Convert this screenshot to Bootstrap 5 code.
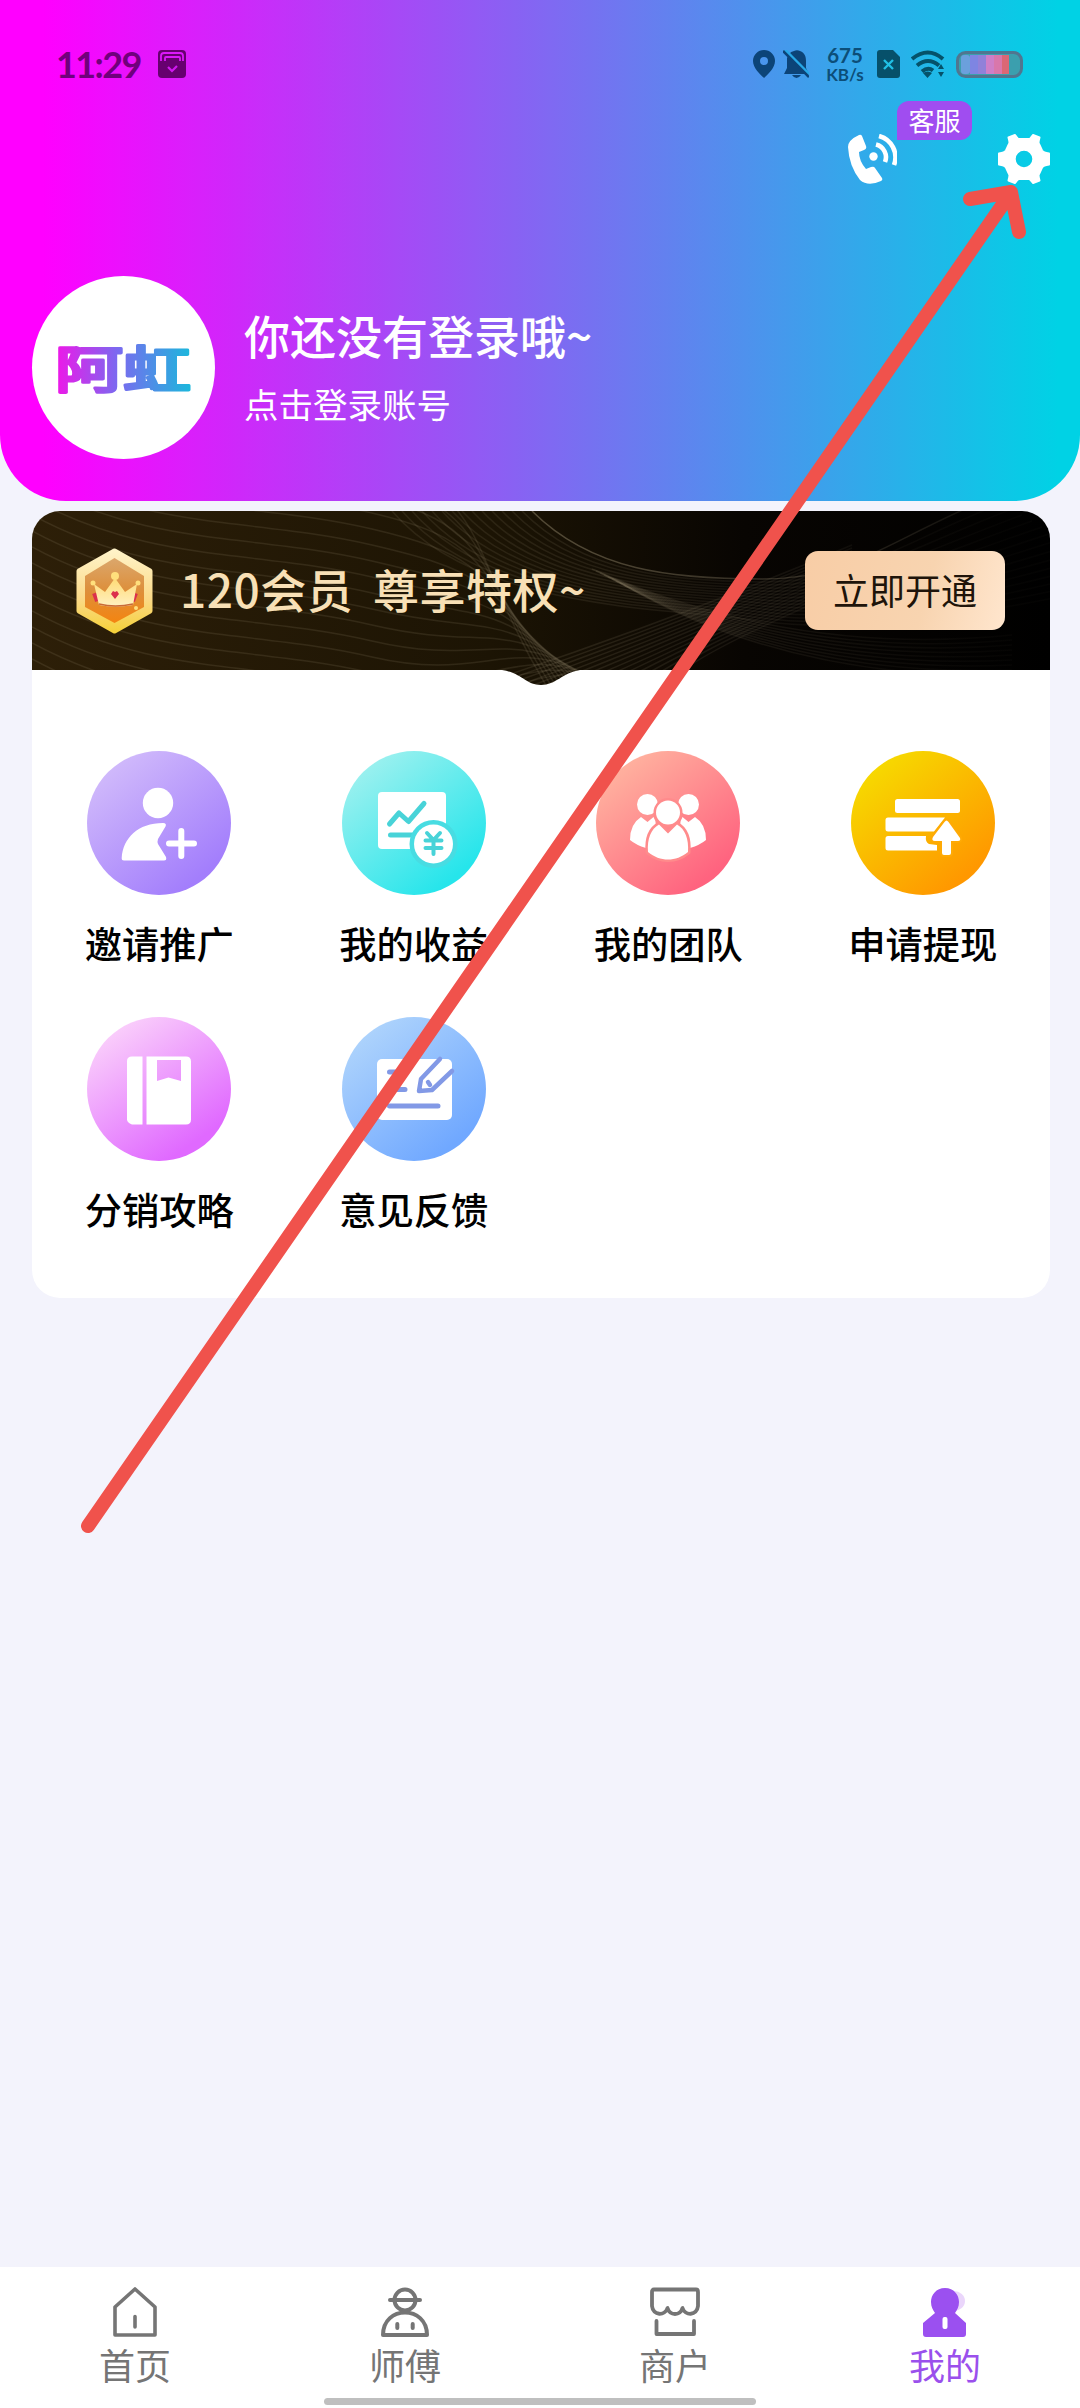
<!DOCTYPE html>
<html lang="zh-CN">
<head>
<meta charset="utf-8">
<meta name="viewport" content="width=device-width, initial-scale=1">
<title>我的</title>
<link href="https://cdn.jsdelivr.net/npm/bootstrap@5.3.0/dist/css/bootstrap.min.css" rel="stylesheet">
<style>
  body { background: #f3f3fc; font-family: "Noto Sans CJK SC", "Noto Sans", sans-serif; color: #000; }
  svg { display: block; flex: none; }
  .app { width: 1080px; height: 2408px; overflow: hidden; }
  .hero { height: 501px; border-radius: 0 0 66px 66px; background: linear-gradient(90deg, #f0f 4%, #00d2e5 98%); }
  .status { height: 86px; padding: 42px 57px 0 56px; }
  .clock { font: 700 36px/44px Lato, sans-serif; color: #70007c; letter-spacing: -1.6px; width: 102px; }
  .speed { width: 38px; margin: 0 13px 0 17px; font-family: Lato, sans-serif; font-weight: 700; color: #0c4e78; text-align: center; white-space: nowrap; }
  .speed-num { font-size: 20.5px; line-height: 20px; }
  .speed-unit { font-size: 17px; line-height: 19px; }
  .sim-gap { margin-left: 11px; }
  .actions { margin-top: 48px; padding-right: 30px; gap: 101px; }
  .tip { left: 49px; top: -33px; width: 75px; height: 39px; border-radius: 12px 12px 12px 0; background: #a04df0; font-size: 26px; line-height: 37px; }
  .profile { margin-top: 92px; padding-left: 32px; gap: 29px; }
  .avatar { width: 183px; height: 183px; }
  .hello { font-size: 46px; line-height: 60px; font-weight: 500; margin-top: -5px; }
  .hint { font-size: 34.5px; line-height: 46px; margin-top: 16px; font-weight: 400; }
  .panel { margin: 10px 30px 0 32px; border-radius: 28px; width: 1018px; height: 787px; }
  .vip { height: 159px; padding: 0 45px 0 43px; }
  .vip-bg { left: 0; top: 0; }
  .vip-title { margin-left: 26px; font-size: 46px; font-weight: 500; line-height: 60px; color: #f8e0b6; letter-spacing: .5px; word-spacing: 9px; white-space: pre; padding-bottom: 5px; }
  .vip-btn { width: 200px; height: 79px; border-radius: 13px; border: 0; font-size: 36px; line-height: 36px; color: #20140a; background: linear-gradient(105deg, #f8cda6, #f8d4b0 60%, #ffe6ce); padding: 0 0 3px; }
  .tiles { padding-top: 81px; }
  .tile { height: 266px; }
  .tile-name { margin-top: 26px; font-size: 37.3px; line-height: 44px; font-weight: 500; }
  .tabs { height: 141px; }
  .tab-item { color: #757575; padding-top: 20px; }
  .tab-item.on { color: #9a50ec; }
  .tab-name { font-size: 36px; line-height: 40px; margin-top: 7px; }
  .pill { width: 432px; height: 7px; margin-top: 14px; background: #bfbfbf; }
  .pointer { left: 0; top: 0; pointer-events: none; }
</style>
<script src="https://cdn.jsdelivr.net/npm/bootstrap@5.3.0/dist/js/bootstrap.bundle.min.js"></script>
</head>
<body>
<div class="app position-relative d-flex flex-column">
  <header class="hero text-white">
    <div class="status d-flex align-items-center">
      <span class="clock">11:29</span>
      <svg width="28" height="28" viewBox="0 0 28 28"><rect width="28" height="28" rx="4" fill="#67006f"/><path d="M3 11V6q0-3 3-3h16q3 0 3 3v5M7 11V8q0-1 1-1h13q1 0 1 1v3" fill="none" stroke="#dc18fb" stroke-width="1.8"/><path d="M10 17l4 4 5-5" fill="none" stroke="#d018f0" stroke-width="2.2"/></svg>
      <div class="d-flex align-items-center ms-auto">
        <svg width="22" height="28" viewBox="0 0 22 28" fill="#0c4478"><path fill-rule="evenodd" d="M11 0a11 11 0 0 1 11 11c0 7-7 13-11 17C7 24 0 18 0 11A11 11 0 0 1 11 0zm0 7a4 4 0 1 0 0 8 4 4 0 0 0 0-8z"/></svg>
        <svg class="ms-2" width="26" height="28" viewBox="-1 0 26 28"><path d="M5 4a10 10 0 0 1 5-3c2-1 4-1 6 0 5 2 6 6 6 10v7l3 6H0l3-6V8zM8 25h9q-2 3-4.500 3T8 25z" fill="#0c4478"/><path d="M1 0l26 26" stroke="#26a7e6" stroke-width="3"/><path d="M-1 1l26 26" stroke="#0c4478" stroke-width="2.600"/></svg>
        <div class="speed"><div class="speed-num">675</div><div class="speed-unit">KB/s</div></div>
        <svg width="23" height="28" viewBox="0 0 23 28"><path d="M3 0h13l7 7v18q0 3-3 3H3q-3 0-3-3V3q0-3 3-3z" fill="#06506a"/><path d="M7 10l9 9m0-9l-9 9" stroke="#20bfe5" stroke-width="2.400"/></svg>
        <svg class="sim-gap" width="34" height="28" viewBox="0 0 34 28"><path d="M1 9Q17-4 32 9M6 15.500q11-9 22 0M11 21.500q6-5 11-1" fill="none" stroke="#05526a" stroke-width="4"/><path d="M12 23q5-3 9 0l-4.500 5zM30 14l3 5h-6zM30 27l3-5h-6z" fill="#05526a"/></svg>
        <svg class="sim-gap" width="67" height="27" viewBox="0 0 67 27"><rect x="1.500" y="1.500" width="64" height="24" rx="8" fill="#3b9fae" stroke="#507690" stroke-width="3"/><rect x="5" y="4" width="9" height="19" rx="3" fill="#6ba0dc"/><path d="M14 4h8v19h-8z" fill="#7e85e2"/><path d="M22 4h8v19h-8z" fill="#9181d9"/><path d="M30 4h8v19h-8z" fill="#ce7fc8"/><path d="M38 4h8v19h-8z" fill="#d977ab"/><path d="M46 4h7v19h-7z" fill="#db6775"/></svg>
      </div>
    </div>
    <div class="actions d-flex justify-content-end">
      <div class="position-relative">
        <svg width="49" height="50" viewBox="0 0 49 50"><path fill="#fff" d="M11 1q2-1 3 1l4 10q1 3-2 4l-5 2q0 9 7 17l5-2q3-1 4 1l7 10q1 2-1 3-13 6-21-1Q1 32 0 13 0 6 11 1z"/><circle cx="25.500" cy="22.500" r="4.200" fill="#fff"/><path d="M28 10.500A13 13 0 0 1 37 28M31 2A22 22 0 0 1 46 31" fill="none" stroke="#fff" stroke-width="4.600"/></svg>
        <span class="tip position-absolute text-center">客服</span>
      </div>
      <svg width="52" height="50" viewBox="-26 -25 52 50"><path fill="#fff" fill-rule="evenodd" stroke="#fff" stroke-width="2" stroke-linejoin="round" d="M-15.500-21.500L-9-24Q-6-20-5-20H5Q6-20 9-24L15.500-21.500Q14-16 15-15L18-8.500Q19-6.500 25-5.500V5.500Q19 6.500 18 8.500L15 15Q14 16 15.500 21.500L9 24Q6 20 5 20H-5Q-6 20-9 24L-15.500 21.500Q-14 16-15 15L-18 8.500Q-19 6.500-25 5.500V-5.500Q-19-6.500-18-8.500L-15-15Q-14-16-15.500-21.500zM0-9.300A9.300 9.300 0 1 0 0 9.300 9.300 9.300 0 1 0 0-9.300z"/></svg>
    </div>
    <div class="profile d-flex align-items-center">
      <div class="avatar rounded-circle bg-white d-flex align-items-center justify-content-center">
        <svg width="170" height="110" viewBox="-4 -20 170 110">
          <defs><linearGradient id="logo" gradientUnits="userSpaceOnUse" x1="12" x2="148" y1="0" y2="0"><stop offset="0" stop-color="#f016e8"/><stop offset=".45" stop-color="#7d68f0"/><stop offset="1" stop-color="#1bb8dc"/></linearGradient></defs>
          <text transform="scale(1 .74)" x="12" y="74" font-size="68" font-weight="500" fill="url(#logo)" stroke="url(#logo)" stroke-width="4" stroke-linejoin="round" stroke-linecap="round">阿虹</text>
        </svg>
      </div>
      <div><div class="hello">你还没有登录哦~</div><div class="hint">点击登录账号</div></div>
    </div>
  </header>

  <main class="panel bg-white overflow-hidden">
    <section class="vip position-relative d-flex align-items-center">
      <svg class="vip-bg position-absolute" width="1018" height="176" viewBox="0 0 1018 176">
        <defs>
          <linearGradient id="dark"><stop offset="0" stop-color="#2d1f08"/><stop offset=".45" stop-color="#1c1404"/><stop offset=".7" stop-color="#080502"/><stop offset="1" stop-color="#000"/></linearGradient>
          <linearGradient id="fade" gradientUnits="userSpaceOnUse" x1="0" x2="1018" y1="0" y2="0"><stop offset="0" stop-color="#a99c7e"/><stop offset=".55" stop-color="#a99c7e"/><stop offset=".95" stop-color="#a99c7e" stop-opacity=".2"/></linearGradient>
          <clipPath id="vipShape"><path d="M0 0H1018V159H548C530 162 524 174 509 174S490 162 470 159H0z"/></clipPath>
        </defs>
        <g clip-path="url(#vipShape)" fill="none"><path d="M0 0H1018V176H0z" fill="url(#dark)"/><g id="waves"></g></g>
      </svg>
      <svg class="position-relative" width="79" height="88" viewBox="0 0 79 88">
        <defs>
          <linearGradient id="rim" x2="0" y2="1"><stop offset="0" stop-color="#fff3c8"/><stop offset=".6" stop-color="#fbd987"/><stop offset="1" stop-color="#f5d13c"/></linearGradient>
          <linearGradient id="core" x2="0" y2="1"><stop offset="0" stop-color="#dba76c"/><stop offset=".5" stop-color="#dd8f3b"/><stop offset="1" stop-color="#f48410"/></linearGradient>
          <linearGradient id="gold" x2="0" y2="1"><stop offset="0" stop-color="#ffdb75"/><stop offset="1" stop-color="#fff0c0"/></linearGradient>
        </defs>
        <path d="M39.500 4L75 24V64L39.500 84 4 64V24z" fill="url(#rim)" stroke="url(#rim)" stroke-width="5" stroke-linejoin="round"/>
        <path d="M39.500 11L69 29V60L39.500 76 10 60V29z" fill="url(#core)"/>
        <path d="M20 46l3 8M60 46l-3 8" stroke="#dc304c" stroke-width="6"/>
        <path d="M19 37L30 45 40 31 50 45 62 37 58 58Q40 61 24 58z" fill="url(#gold)"/><path d="M24 57q16 4 34 0" stroke="#c86a38" stroke-width="1.500" fill="none"/>
        <g fill="#ffdf7c"><circle cx="18" cy="36" r="2.500"/><circle cx="40" cy="29" r="4"/><circle cx="63" cy="36" r="2.500"/><circle cx="61" cy="61" r="2"/></g>
        <path d="M40 52l-4-5 2-3 2 1 2-1 2 3z" fill="#dc304c"/>
      </svg>
      <span class="vip-title position-relative">120会员 尊享特权~</span>
      <button class="vip-btn btn position-relative ms-auto">立即开通</button>
    </section>

    <section class="tiles row g-0 text-center">
      <div class="tile col-3 d-flex flex-column align-items-center">
        <svg width="144" height="144" viewBox="0 0 144 144"><defs><linearGradient id="c1" x1=".1" y1=".1" x2=".75" y2=".9"><stop stop-color="#d2bcfb"/><stop offset="1" stop-color="#a37efc"/></linearGradient></defs><circle cx="72" cy="72" r="72" fill="url(#c1)"/>
          <g fill="#fff"><circle cx="71" cy="52" r="15.200"/><path d="M37 109.500q-2.500 0-2.300-2.500C36 87 51 72 76 72q4 0 2.500 3.500L71 88q-1 3 0 5l8 13q1 3.500-2 3.500z"/><path d="M94.300 80v25M82 92.500h25" stroke="#fff" stroke-width="6" stroke-linecap="round"/></g></svg>
        <div class="tile-name">邀请推广</div>
      </div>
      <div class="tile col-3 d-flex flex-column align-items-center">
        <svg width="144" height="144" viewBox="0 0 144 144"><defs><linearGradient id="c2" x1=".1" y1=".1" x2=".75" y2=".9"><stop stop-color="#a0f1ef"/><stop offset="1" stop-color="#26e5eb"/></linearGradient></defs><circle cx="72" cy="72" r="72" fill="url(#c2)"/>
          <rect x="36" y="41" width="68" height="57" rx="4" fill="#fff"/><path d="M47.500 73L57 62l9.500 8.500L82 52.500M48.500 84H74" fill="none" stroke="#48d3d8" stroke-width="5" stroke-linecap="round" stroke-linejoin="round"/>
          <circle cx="91.500" cy="93" r="24" fill="#48dce2"/><circle cx="91.500" cy="93" r="19.500" fill="#fff"/><path d="M85 82l6.500 7 6.500-7M83.500 89.500h16M83.500 97h16M91.500 89v14" fill="none" stroke="#48d3d8" stroke-width="4" stroke-linecap="round"/></svg>
        <div class="tile-name">我的收益</div>
      </div>
      <div class="tile col-3 d-flex flex-column align-items-center">
        <svg width="144" height="144" viewBox="0 0 144 144"><defs><linearGradient id="c3" x1=".1" y1=".1" x2=".75" y2=".9"><stop stop-color="#ffb5a0"/><stop offset="1" stop-color="#ff637f"/></linearGradient></defs><circle cx="72" cy="72" r="72" fill="url(#c3)"/>
          <g fill="#fff"><circle cx="51.500" cy="53.500" r="10.500"/><circle cx="92.500" cy="53.500" r="10.500"/><path d="M45 66l6.500 5 6-5q5 8 0 17L50 97Q40 94 34 89q0-16 11-23zM99 66l-6.500 5-6-5q-5 8 0 17L94 97q10-3 16-8 0-16-11-23z"/>
          <path d="M63 73.500l9 9 9-9C89 78 93 88 92 101 80 111 64 111 52 101 51 88 55 78 63 73.500z" stroke="#ff8b8c" stroke-width="5" paint-order="stroke"/><circle cx="72" cy="61.500" r="12" stroke="#ff8b8c" stroke-width="5" paint-order="stroke"/></g></svg>
        <div class="tile-name">我的团队</div>
      </div>
      <div class="tile col-3 d-flex flex-column align-items-center">
        <svg width="144" height="144" viewBox="0 0 144 144"><defs><linearGradient id="c4" x1=".1" y1=".1" x2=".75" y2=".9"><stop stop-color="#f6dc00"/><stop offset="1" stop-color="#ff9800"/></linearGradient></defs><circle cx="72" cy="72" r="72" fill="url(#c4)"/>
          <g fill="#fff"><rect x="44" y="48" width="65" height="14" rx="2.500"/><path d="M37 66.500H94L83 80.500H37q-2.500 0-2.500-2.500V69q0-2.500 2.500-2.500zM37 85H75q-1 6 3 8l8 1v5.500H37q-2.500 0-2.500-2.500V87.500Q34.500 85 37 85z"/><path d="M93.500 71q2-3 4 0L109 87q1 3-2 3h-7v12q0 2-2 2h-5q-2 0-2-2V90h-7q-4 0-2-4z" stroke="#ffaa05" stroke-width="4" paint-order="stroke"/></g></svg>
        <div class="tile-name">申请提现</div>
      </div>
      <div class="tile col-3 d-flex flex-column align-items-center">
        <svg width="144" height="144" viewBox="0 0 144 144"><defs><linearGradient id="c5" x1=".15" y1=".1" x2=".7" y2=".9"><stop stop-color="#facffb"/><stop offset="1" stop-color="#e069ff"/></linearGradient></defs><circle cx="72" cy="72" r="72" fill="url(#c5)"/>
          <g fill="#fff"><path d="M45 39.500h10.500v68H45q-5-2-5-5V44q0-4.500 5-4.500z"/><path fill-rule="evenodd" d="M59.500 39.500H99q5 0 5 5v58q0 5-5 5H59.500zM70 43v21l11.500-3.500L94 64V43z"/></g></svg>
        <div class="tile-name">分销攻略</div>
      </div>
      <div class="tile col-3 d-flex flex-column align-items-center">
        <svg width="144" height="144" viewBox="0 0 144 144"><defs><linearGradient id="c6" x1=".1" y1=".1" x2=".75" y2=".9"><stop stop-color="#b0d5fc"/><stop offset="1" stop-color="#70a8ff"/></linearGradient></defs><circle cx="72" cy="72" r="72" fill="url(#c6)"/>
          <rect x="35" y="42" width="75" height="61" rx="5" fill="#fff"/><path d="M47.500 55H60M47.500 72.500H63M47.500 89H96" stroke="#8299e6" stroke-width="5" stroke-linecap="round"/>
          <path d="M98 42L79 62l-2 12 13-1 20-19M86 65l2 3" fill="#fff" stroke="#8299e6" stroke-width="4.500" stroke-linejoin="round" stroke-linecap="round"/></svg>
        <div class="tile-name">意见反馈</div>
      </div>
    </section>
  </main>

  <nav class="tabs bg-white mt-auto">
    <div class="row g-0 text-center">
      <div class="tab-item col-3 d-flex flex-column align-items-center">
        <svg width="50" height="50" viewBox="0 0 50 50" fill="none" stroke="currentColor" stroke-width="3.600" stroke-linejoin="round" stroke-linecap="round"><path d="M25 2L45 20V48H5V20zM25 29.500V40"/></svg>
        <div class="tab-name">首页</div>
      </div>
      <div class="tab-item col-3 d-flex flex-column align-items-center">
        <svg width="50" height="50" viewBox="0 0 50 50" fill="none" stroke="currentColor" stroke-width="4" stroke-linejoin="round" stroke-linecap="round"><circle cx="25" cy="13" r="10.500"/><path d="M10 13H40M3 48C3 18 47 18 47 48zM17.300 37v4M32.700 37v4"/></svg>
        <div class="tab-name">师傅</div>
      </div>
      <div class="tab-item col-3 d-flex flex-column align-items-center">
        <svg width="50" height="50" viewBox="0 0 50 50" fill="none" stroke="currentColor" stroke-width="3.800" stroke-linejoin="round" stroke-linecap="round"><path d="M4 2.500H46Q48 2.500 48 5V19C47 29 35 29 32.500 21 30 29 20 29 17.500 21 15 29 3 29 2 19V5Q2 2.500 4 2.500zM6.500 34V47H44V34"/></svg>
        <div class="tab-name">商户</div>
      </div>
      <div class="tab-item on col-3 d-flex flex-column align-items-center">
        <svg width="50" height="50" viewBox="0 0 50 50"><ellipse cx="34" cy="14" rx="11" ry="10" fill="#ead6fb"/><path d="M25 1C34 1 39 8 39 15 39 20 37 23 35 26L46 36V47Q46 50 43 50H6Q3 50 3 47V36L15 26C13 23 11 20 11 15 11 8 16 1 25 1z" fill="#9b50f0"/><rect x="22.500" y="30" width="5" height="12" rx="2" fill="#fff"/></svg>
        <div class="tab-name">我的</div>
      </div>
    </div>
    <div class="pill rounded-pill mx-auto"></div>
  </nav>

  <svg class="pointer position-absolute" width="1080" height="1600" viewBox="0 0 1080 1600" fill="none" stroke="#f0524c" stroke-width="14" stroke-linecap="round" stroke-linejoin="round"><path d="M88 1526L1010 194M970 199L1011 192 1019 232"/></svg>
</div>
<script>
  // Fine contour lines across the membership banner
  const lines = [];
  const add = (d, o) => lines.push(`<path d="${d}" stroke="url(#fade)" stroke-opacity="${o}" stroke-width="1.5"/>`);
  for (let i = -9; i < 14; i++) {
    const y = i * 16;
    add(`M0 ${y + 20}C120 ${y + 85} 220 ${y + 70} 340 ${y + 98}S${470 + i * 4} ${96 + i * 6} ${560 + i * 5} ${176}`, .14);
  }
  for (let i = 0; i < 15; i++) {
    add(`M${500 - i * 10} 0C${560 - i * 8} ${60 + i * 3} 640 ${68 + i * 2} 730 ${68 + i * 3}S${850 + i * 8} ${32 + i * 5} ${960 + i * 10} ${-14 + i * 6}`, i ? .12 : .4);
    add(`M${440 + i * 14} 176Q640 ${110 + i * 3} 820 ${34 + i * 3}`, .14);
    if (i < 9) add(`M${560 + i * 4} ${58 + i * 2}Q760 ${146 + i * 3} 980 ${124 + i * 5}`, .14);
  }
  document.getElementById('waves').innerHTML = lines.join('');
</script>
</body>
</html>
